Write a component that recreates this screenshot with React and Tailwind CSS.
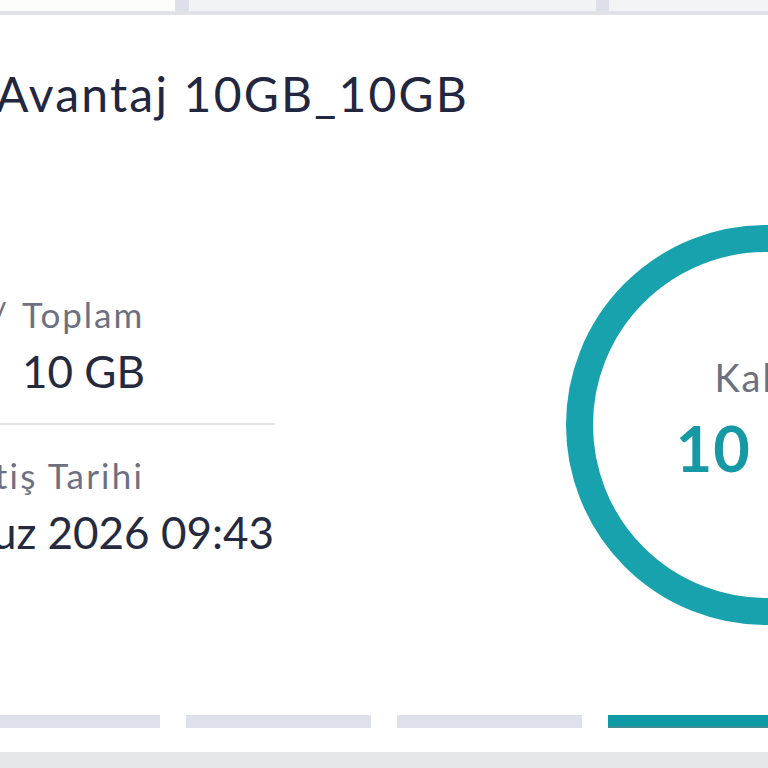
import React from 'react';

const font = { fontFamily: 'Lato, "Noto Sans", sans-serif' };

const App = () => {
  return (
    <div className="w-[768px] h-[768px] overflow-hidden bg-white flex flex-col" style={font}>
      {/* bottom edge of the tabs above */}
      <div className="flex h-[11px] shrink-0">
        <div className="w-[175px] bg-[#fdfdfb]" />
        <div className="w-[14px] bg-[#dde0ea]" />
        <div className="flex-1 bg-[#f2f3f5]" />
        <div className="w-[13px] bg-[#dde0ea]" />
        <div className="w-[159px] bg-[#f3f4f5]" />
      </div>
      <div className="h-[4px] shrink-0 bg-[#e1e2e8]" />

      {/* package card */}
      <div className="h-[737px] shrink-0 flex flex-col overflow-hidden">
        <h2 className="mt-[51px] ml-[-4px] text-[48px] leading-[56px] font-normal text-[#22263f] whitespace-nowrap tracking-[2.2px]">
          Avantaj 10GB_10GB
        </h2>

        <div className="mt-[103px] flex h-[400px]">
          <div className="w-[566px] shrink-0 flex flex-col pt-[69px]">
            <div className="flex items-baseline text-[35px] leading-[40px] text-[#6d7080] tracking-[2px]">
              <span className="w-[9px] overflow-hidden flex justify-end">/</span>
              <span className="ml-[13px]">Toplam</span>
            </div>
            <div className="mt-[13px] ml-[22px] text-[44px] leading-[48px] text-[#262a3e]">10 GB</div>
            <div className="mt-[28px] w-[275px] h-[2px] bg-[#e3e4e9]" />
            <div className="mt-[30px] w-[144px] overflow-hidden flex justify-end text-[35px] leading-[40px] text-[#6d7080] whitespace-nowrap tracking-[2.2px]">
              Bitiş Tarihi
            </div>
            <div className="mt-[13px] w-[274px] overflow-hidden flex justify-end text-[44px] leading-[48px] text-[#262a3e] whitespace-nowrap">
              12 Temmuz 2026 09:43
            </div>
          </div>

          <div className="w-[400px] h-[400px] shrink-0 rounded-full border-[27px] border-[#17a2ae] flex flex-col items-center justify-center">
            <span className="mt-[-14px] text-[38px] leading-[44px] text-[#6d7080] tracking-[2px]">Kalan</span>
            <span className="mt-[16px] text-[63px] leading-[66px] font-bold text-[#1698a5] tracking-[1px]">10 GB</span>
          </div>
        </div>

        {/* step bars */}
        <div className="mt-[90px] ml-[-25px] flex gap-[26px]">
          <div className="w-[185px] h-[13px] shrink-0 bg-[#dfe1ea]" />
          <div className="w-[185px] h-[13px] shrink-0 bg-[#dfe1ea]" />
          <div className="w-[185px] h-[13px] shrink-0 bg-[#dfe1ea]" />
          <div className="w-[185px] h-[13px] shrink-0 bg-[#0f9aa6] border-b-2 border-[#3f8f96]" />
        </div>
      </div>

      <div className="h-[16px] shrink-0 bg-[#e6e7eb]" />
    </div>
  );
};

export default App;
